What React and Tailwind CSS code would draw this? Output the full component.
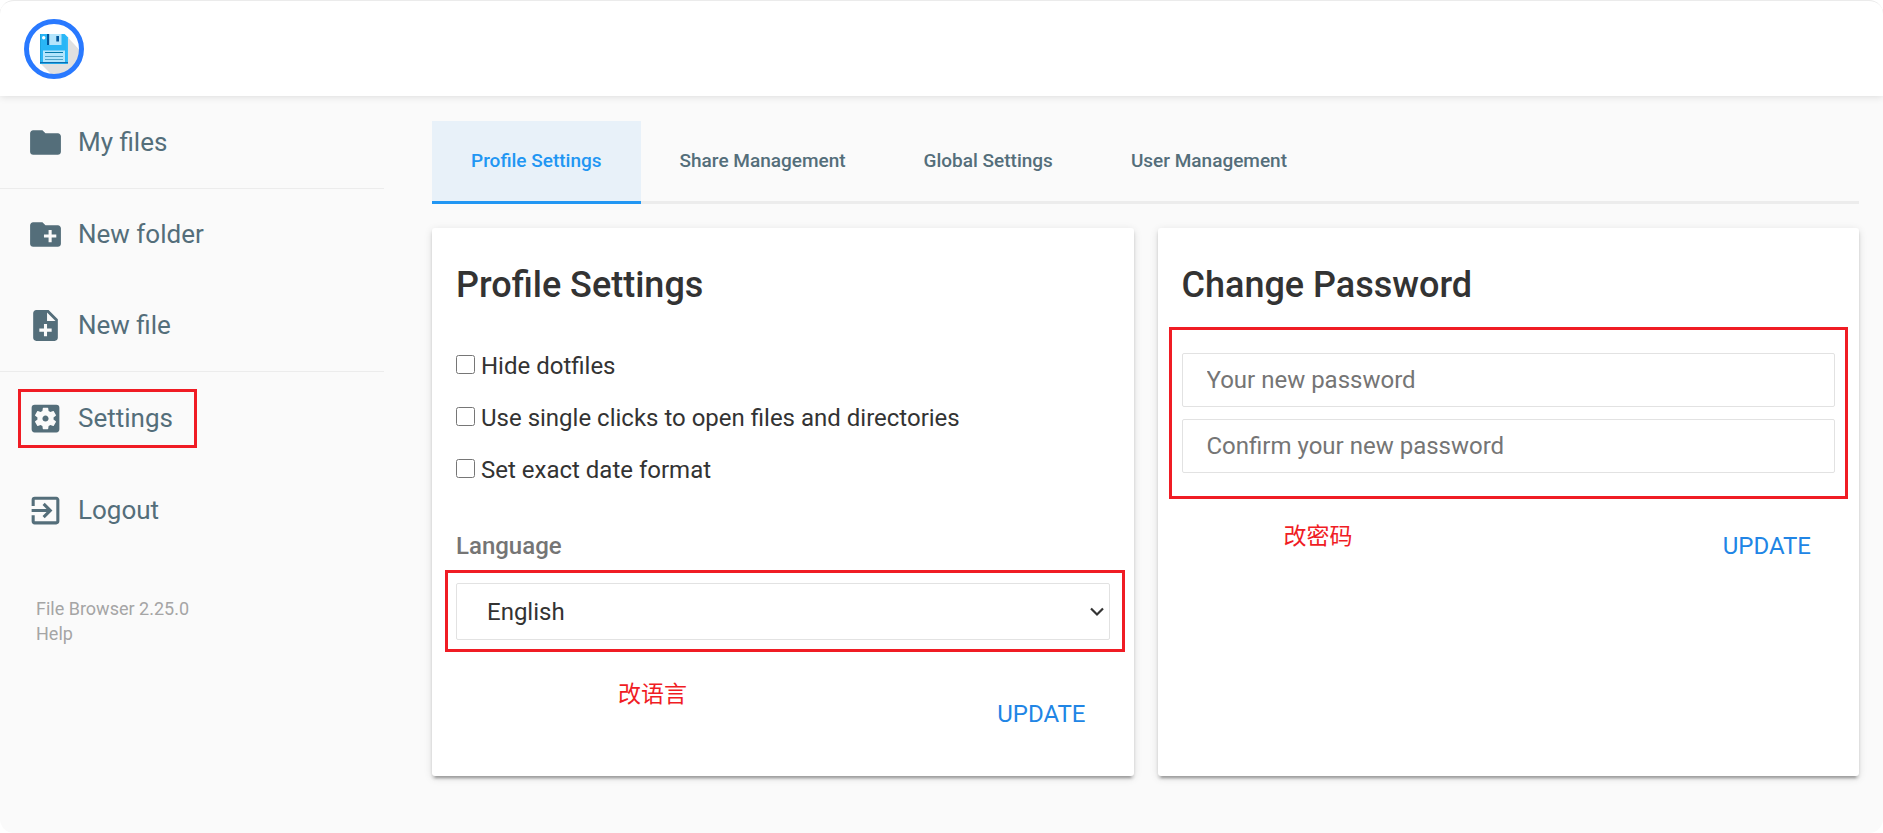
import React from "react";
import {
  MdFolder,
  MdCreateNewFolder,
  MdNoteAdd,
  MdSettingsApplications,
  MdExitToApp,
} from "react-icons/md";

const tabs = ["Profile Settings", "Share Management", "Global Settings", "User Management"];
const options = [
  "Hide dotfiles",
  "Use single clicks to open files and directories",
  "Set exact date format",
];

function Logo() {
  return (
    <svg viewBox="0 0 60 60" className="size-[60px]" role="img" aria-label="File Browser">
      <circle cx="30" cy="30" r="27.5" fill="#fff" />
      <clipPath id="disc">
        <circle cx="30" cy="30" r="26" />
      </clipPath>
      <path d="M43.500 18 L64 40 L50 64 L32 60 L17 45 Z" fill="#e0e0e0" clipPath="url(#disc)" />
      <path d="M16 15 H40.500 L44 18.500 V45 H16 Z" fill="#29b6f6" />
      <path d="M40.500 15 L44 18.500 V45 H42.500 V18 L39 15 Z" fill="#35bdfb" />
      <path d="M16 15 H17 V45 H16 Z" fill="#1fa5e0" />
      <rect x="16" y="43" width="28" height="1.200" fill="#01579b" opacity="0.75" />
      <rect x="23" y="15" width="14.500" height="11" fill="#b3e5fc" />
      <rect x="23" y="15" width="2.200" height="11" fill="#01579b" />
      <rect x="32.300" y="17" width="2.700" height="5.500" fill="#01579b" />
      <circle cx="19.700" cy="18.700" r="1.700" fill="#fff" />
      <rect x="19" y="31.500" width="22" height="11.500" fill="#b3e5fc" />
      <rect x="21" y="33" width="18" height="1" fill="#0277a8" />
      <rect x="21" y="37" width="18" height="1" fill="#4fa3c7" />
      <rect x="21" y="40" width="18" height="1" fill="#4fa3c7" />
      <circle cx="30" cy="30" r="27.500" fill="none" stroke="#2979ff" strokeWidth="5" />
    </svg>
  );
}

function NavItem({ icon: Icon, label, marked }) {
  return (
    <button type="button" className="flex h-full w-full items-center px-[18px] text-left">
      <span
        className={
          "flex h-[59px] items-center gap-[14px] pr-6 pl-[9px] " +
          (marked ? "outline-3 -outline-offset-3 outline-[#f01c24]" : "")
        }
      >
        <Icon className="size-[37px]" aria-hidden="true" />
        <span>{label}</span>
      </span>
    </button>
  );
}

function Card({ title, children }) {
  return (
    <section className="flex-1 rounded-[3px] bg-white px-6 shadow-[0_3px_3px_rgba(0,0,0,0.14),0_5px_2px_-3px_rgba(0,0,0,0.2),0_2px_8px_rgba(0,0,0,0.12)]">
      <h2 className="pt-9 text-[36px] leading-[42px] font-medium text-[#333]">{title}</h2>
      {children}
    </section>
  );
}

function UpdateButton() {
  return (
    <button type="button" className="h-14 px-6 text-[24px] text-[#2185e5]">
      UPDATE
    </button>
  );
}

function Note({ children }) {
  return (
    <span
      lang="zh"
      className="text-[23px] leading-[26px] text-[#f01c24] [font-family:'Noto_Sans_CJK_SC',sans-serif]"
    >
      {children}
    </span>
  );
}

const fieldClass =
  "w-full rounded-[2px] border border-[#e2e2e2] bg-white px-6 text-[24px] text-[#333] placeholder:text-[#757575]";

export default function App() {
  return (
    <div className="min-h-screen overflow-hidden rounded-[14px] border-t border-[#ebebeb] bg-[#fafafa] text-[#333] [font-family:Roboto,sans-serif]">
      <header className="flex h-[95px] items-center bg-white px-6 shadow-[0_0_8px_rgba(0,0,0,0.15)]">
        <Logo />
      </header>
      <div className="flex pt-px">
        <nav className="w-96 shrink-0 text-[26px] text-[#546e7a]">
          <div className="grid auto-rows-[91px] border-b border-[#ececec]">
            <NavItem icon={MdFolder} label="My files" />
          </div>
          <div className="grid auto-rows-[91px] border-b border-[#ececec]">
            <NavItem icon={MdCreateNewFolder} label="New folder" />
            <NavItem icon={MdNoteAdd} label="New file" />
          </div>
          <div className="grid auto-rows-[92px]">
            <NavItem icon={MdSettingsApplications} label="Settings" marked />
            <NavItem icon={MdExitToApp} label="Logout" />
          </div>
          <div className="mt-10 flex flex-col items-start pl-9 text-[18px] leading-[25px] text-[#a5a5a5]">
            <a href="#version">File Browser 2.25.0</a>
            <a href="#help">Help</a>
          </div>
        </nav>
        <main className="min-w-0 flex-1 pt-6 pr-6 pb-14 pl-12">
          <ul className="flex border-b-3 border-[#ececec] text-[19px] font-medium text-[#546e7a]">
            {tabs.map((tab, i) => (
              <li key={tab} className="-mb-[3px]">
                <a
                  href={"#tab-" + i}
                  className={
                    "flex h-[83px] items-center border-b-3 px-[39px] " +
                    (i === 0 ? "border-[#2196f3] bg-[#e8f1f9] text-[#2196f3]" : "border-transparent")
                  }
                >
                  {tab}
                </a>
              </li>
            ))}
          </ul>
          <div className="mt-6 flex gap-6">
            <Card title="Profile Settings">
              <div className="mt-[34px] flex flex-col">
                {options.map((option) => (
                  <label key={option} className="flex h-[52px] items-center gap-[6px] text-[24px]">
                    <input type="checkbox" className="mb-[3px] size-[19px]" />
                    {option}
                  </label>
                ))}
              </div>
              <label
                htmlFor="language"
                className="mt-9 block text-[24px] leading-7 font-medium text-[#757575]"
              >
                Language
              </label>
              <div className="relative mt-[23px]">
                <select id="language" className={fieldClass + " h-[57px] appearance-none pl-[30px]"}>
                  <option>English</option>
                </select>
                <svg
                  viewBox="0 0 14 10"
                  className="pointer-events-none absolute top-6 right-[6px] h-[10px] w-[14px]"
                  fill="none"
                  stroke="#333"
                  strokeWidth="2.2"
                  aria-hidden="true"
                >
                  <path d="M1 1.500 L7 7.500 L13 1.500" />
                </svg>
                <div className="pointer-events-none absolute -top-[13px] -right-[15px] -bottom-3 -left-[11px] border-3 border-[#f01c24]" />
              </div>
              <div className="mt-[39px] flex items-start justify-between pb-[34px] pl-[162px]">
                <Note>改语言</Note>
                <div className="pt-[7px]">
                  <UpdateButton />
                </div>
              </div>
            </Card>
            <Card title="Change Password">
              <div className="relative mt-[47px] flex flex-col gap-3">
                <input
                  type="password"
                  aria-label="Your new password"
                  placeholder="Your new password"
                  className={fieldClass + " h-[54px]"}
                />
                <input
                  type="password"
                  aria-label="Confirm your new password"
                  placeholder="Confirm your new password"
                  className={fieldClass + " h-[54px]"}
                />
                <div className="pointer-events-none absolute -inset-x-[13px] -inset-y-[26px] border-3 border-[#f01c24]" />
              </div>
              <div className="mt-[45px] flex items-start justify-between pl-[102px]">
                <div className="pt-[3px]">
                  <Note>改密码</Note>
                </div>
                <UpdateButton />
              </div>
            </Card>
          </div>
        </main>
      </div>
    </div>
  );
}
